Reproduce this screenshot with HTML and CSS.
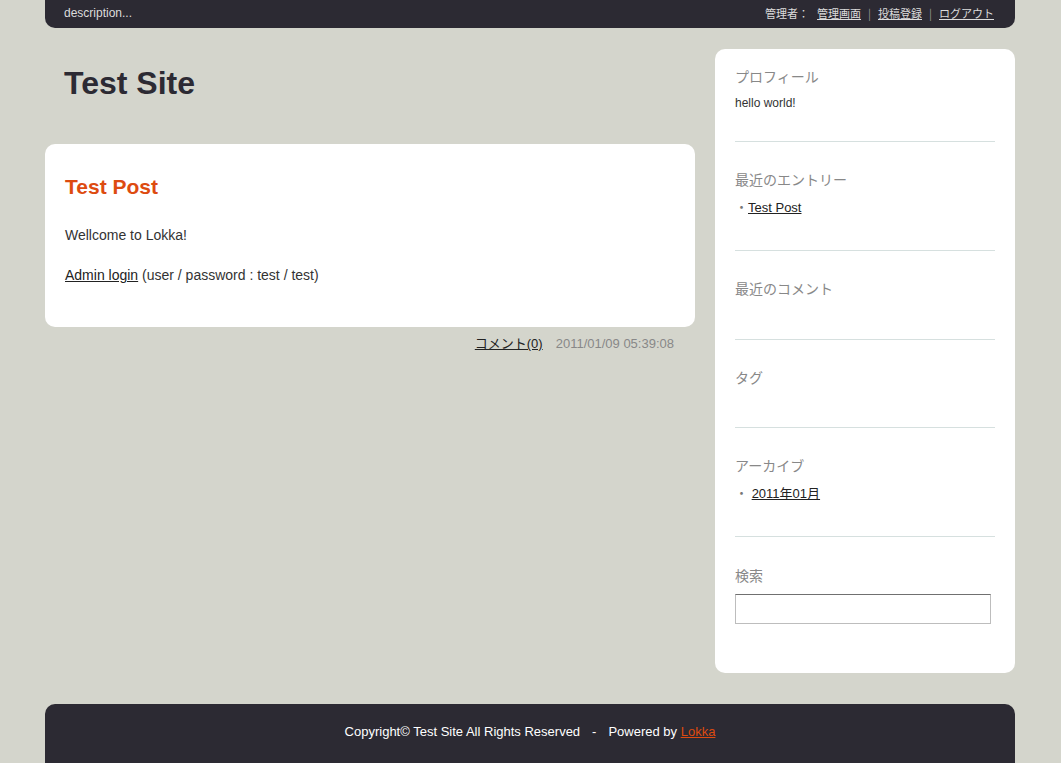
FILE: index.html
```html
<!DOCTYPE html>
<html lang="ja">
<head>
<meta charset="utf-8">
<title>Test Site</title>
<link rel="stylesheet" href="styles.css">
</head>
<body>
<div class="page">
  <div class="topbar">
    <span class="desc">description...</span>
    <span class="admin"><span class="role">管理者：</span><a href="#">管理画面</a><span class="sep">|</span><a href="#">投稿登録</a><span class="sep">|</span><a href="#">ログアウト</a></span>
  </div>
  <div class="columns">
    <div class="main">
      <div class="header"><h1 class="site-title">Test Site</h1></div>
      <div class="post">
        <h2 class="post-title">Test Post</h2>
        <div class="post-body">
          <p>Wellcome to Lokka!</p>
          <p><a href="#">Admin login</a> (user / password : test / test)</p>
        </div>
      </div>
      <div class="post-meta"><a href="#">コメント(0)</a><span class="date">2011/01/09 05:39:08</span></div>
    </div>
    <div class="sidebar">
      <div class="section first">
        <h3 class="sec-title">プロフィール</h3>
        <p class="profile">hello world!</p>
      </div>
      <div class="section">
        <h3 class="sec-title">最近のエントリー</h3>
        <ul class="list"><li><span class="dot">・</span><a href="#">Test Post</a></li></ul>
      </div>
      <div class="section">
        <h3 class="sec-title empty">最近のコメント</h3>
      </div>
      <div class="section">
        <h3 class="sec-title empty">タグ</h3>
      </div>
      <div class="section">
        <h3 class="sec-title">アーカイブ</h3>
        <ul class="list"><li><span class="dot">・</span> <a href="#">2011年01月</a></li></ul>
      </div>
      <div class="section last">
        <h3 class="sec-title">検索</h3>
        <input class="search" type="text">
      </div>
    </div>
  </div>
  <div class="footer">Copyright© Test Site All Rights Reserved<span class="dash">-</span>Powered by <a href="#">Lokka</a></div>
</div>
</body>
</html>
```
FILE: styles.css
```css
html, body {
  margin: 0;
  padding: 0;
  background: #d4d5cc;
}
body {
  font-family: "Liberation Sans", Arial, "Noto Sans CJK JP", sans-serif;
  color: #333;
}
.page {
  width: 970px;
  margin: 0 46px 0 45px;
}
.topbar {
  background: #2c2a33;
  height: 28px;
  border-radius: 0 0 10px 10px;
  display: flex;
  justify-content: space-between;
  align-items: center;
  padding: 0 21px 2px 19px;
  box-sizing: border-box;
  color: #dcdcdc;
}
.desc {
  font-size: 12px;
}
.admin {
  font-size: 11px;
  font-family: "Noto Sans CJK JP", sans-serif;
}
.role {
  margin-right: 8px;
}
.admin a {
  color: #dcdcdc;
}
.sep {
  color: #999;
  margin: 0 7px;
}
.columns {
  display: flex;
  align-items: flex-start;
  gap: 20px;
  margin-top: 21px;
}
.main {
  width: 650px;
}
.header {
  padding: 15px 19px 42px;
}
.site-title {
  margin: 0;
  font-size: 32px;
  line-height: 38px;
  font-weight: bold;
  color: #2c2a33;
}
.post {
  background: #fff;
  border-radius: 10px;
  padding: 30px 20px 22px;
}
.post-title {
  margin: 0 0 25px;
  font-size: 21px;
  line-height: 26px;
  color: #dd4b10;
}
.post-body p {
  margin: 0 0 20px;
  font-size: 14px;
  line-height: 20px;
  color: #333;
}
a {
  color: #222;
}
.post-meta {
  text-align: right;
  font-size: 13px;
  line-height: 18px;
  margin-top: 8px;
  padding-right: 21px;
}
.post-meta a {
  font-family: "Liberation Sans", "Noto Sans CJK JP", sans-serif;
}
.date {
  color: #888;
  margin-left: 13px;
}
.sidebar {
  width: 300px;
  box-sizing: border-box;
  background: #fff;
  border-radius: 10px;
  padding: 20px 20px 19px;
}
.section {
  padding: 30px 0;
  border-bottom: 1px solid #d6e0df;
}
.section.first {
  padding-top: 0;
}
.section.last {
  padding-top: 31px;
  border-bottom: none;
}
.sec-title {
  margin: 0 0 10px;
  font-size: 14px;
  line-height: 16px;
  font-weight: normal;
  color: #888;
  font-family: "Liberation Sans", "Noto Sans CJK JP", sans-serif;
}
.sec-title.empty {
  margin-bottom: 11.5px;
}
.profile {
  margin: 0;
  font-size: 12px;
  line-height: 16px;
  color: #333;
}
.list {
  list-style: none;
  margin: 0 0 3px;
  padding: 0;
  font-size: 13px;
  line-height: 18px;
}
.dot {
  color: #777;
  font-family: "Noto Sans CJK JP", sans-serif;
}
.list a {
  font-family: "Liberation Sans", "Noto Sans CJK JP", sans-serif;
}
.search {
  display: block;
  width: 256px;
  height: 30px;
  box-sizing: border-box;
  margin: 0;
  border: 1px solid #bdbdbd;
  border-top-color: #707070;
  background: #fff;
}
.footer {
  margin-top: 31px;
  background: #2c2a33;
  border-radius: 10px 10px 0 0;
  padding: 20px 0 30px;
  text-align: center;
  color: #fff;
  font-size: 13px;
  line-height: 16px;
}
.dash {
  margin: 0 12px;
}
.footer a {
  color: #dd4b10;
}
```
